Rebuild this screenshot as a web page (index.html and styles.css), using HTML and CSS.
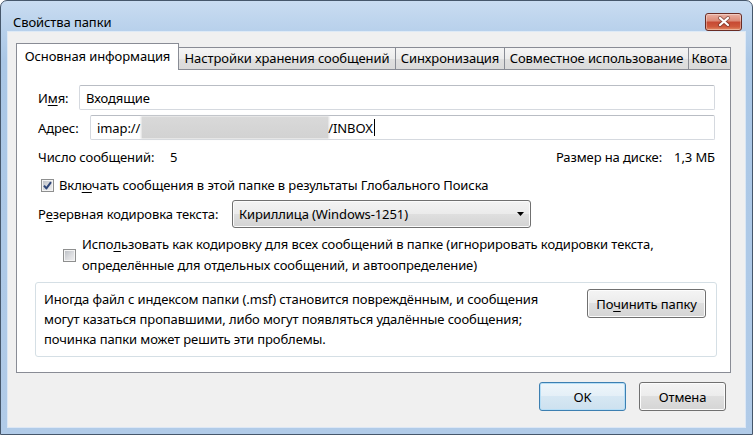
FILE: index.html
```html
<!DOCTYPE html>
<html lang="ru">
<head>
<meta charset="utf-8">
<title>Свойства папки</title>
<link rel="stylesheet" href="styles.css">
</head>
<body>
<div class="window">
  <div class="titlebar">
    <span class="title">Свойства папки</span>
    <button class="close" aria-label="Закрыть">
      <svg width="14" height="11" viewBox="0 0 14 11">
        <path d="M3 2 L11 9 M11 2 L3 9" stroke="#5a2a22" stroke-width="4" stroke-linecap="round" fill="none" opacity="0.55"/>
        <path d="M3 2 L11 9 M11 2 L3 9" stroke="#ffffff" stroke-width="2.2" stroke-linecap="round" fill="none"/>
      </svg>
    </button>
  </div>
  <div class="client">
    <div class="tabs">
      <div class="tab active t1">Основная информация</div>
      <div class="tab t2">Настройки хранения сообщений</div>
      <div class="tab t3">Синхронизация</div>
      <div class="tab t4">Совместное использование</div>
      <div class="tab t5">Квота</div>
    </div>
    <div class="panel">
      <div class="field-row first">
        <span class="lbl lbl-name">И<u>м</u>я:</span>
        <div class="textbox">Входящие</div>
      </div>
      <div class="field-row">
        <span class="lbl lbl-addr">Адрес:</span>
        <div class="textbox">imap://<span class="blur"></span>/INBOX<span class="caret"></span></div>
      </div>
      <div class="stats">
        <span class="stat"><span class="stat-lbl">Число сообщений:</span><span>5</span></span>
        <span class="stat"><span class="stat-lbl right">Размер на диске:</span><span>1,3 МБ</span></span>
      </div>
      <div class="check-row">
        <span class="checkbox">
          <svg class="tick" width="9" height="9" viewBox="0 0 9 9">
            <path d="M1 4.6 L3.4 7.4 L8 1.2" stroke="#2e4577" stroke-width="2" fill="none" stroke-linejoin="round"/>
          </svg>
        </span>
        <span>Вкл<u>ю</u>чать сообщения в этой папке в результаты Глобального Поиска</span>
      </div>
      <div class="select-row">
        <span class="lbl lbl-enc">Р<u>е</u>зервная кодировка текста:</span>
        <div class="combo">
          <span>Кириллица (Windows-1251)</span>
          <svg width="7" height="4" viewBox="0 0 7 4"><path d="M0 0 H7 L3.5 4 Z" fill="#000"/></svg>
        </div>
      </div>
      <div class="check2">
        <span class="checkbox"></span>
        <span class="check2-text">Испо<u>л</u>ьзовать как кодировку для всех сообщений в папке (игнорировать кодировки текста,<br>определённые для отдельных сообщений, и автоопределение)</span>
      </div>
      <div class="group">
        <p class="group-text">Иногда файл с индексом папки (.msf) становится повреждённым, и сообщения<br>могут казаться пропавшими, либо могут появляться удалённые сообщения;<br>починка папки может решить эти проблемы.</p>
        <button class="btn repair">По<u>ч</u>инить папку</button>
      </div>
    </div>
    <div class="buttons">
      <button class="btn dlg default">OK</button>
      <button class="btn dlg">Отмена</button>
    </div>
  </div>
</div>
</body>
</html>
```
FILE: styles.css
```css
* { box-sizing: border-box; }
html, body { margin: 0; padding: 0; }
body {
  width: 753px;
  height: 435px;
  overflow: hidden;
  background: #ffffff;
  font-family: "Noto Sans", "Open Sans", "DejaVu Sans", sans-serif;
  font-size: 13px;
  letter-spacing: -0.1px;
  color: #000;
}
u { text-decoration: underline; text-underline-offset: 2px; }

.window {
  height: 435px;
  display: flex;
  flex-direction: column;
  border: 1px solid #46576b;
  border-radius: 7px 7px 0 0;
  background: linear-gradient(180deg, #c9dcf1 0px, #b7d0eb 31px, #aac7e6 60px, #b1cbe8 100%);
}

.titlebar {
  height: 31px;
  flex: none;
  display: flex;
  align-items: center;
  justify-content: space-between;
  padding: 10px 10px 0 12px;
}
.title { font-size: 13px; color: #000; line-height: 18px; }
.close {
  width: 37px;
  height: 18px;
  padding: 0;
  margin: 0;
  display: flex;
  align-items: center;
  justify-content: center;
  border: 1px solid #6a2c24;
  border-radius: 3px;
  background: linear-gradient(180deg, #eab0a2 0%, #dc8b78 42%, #c74a33 52%, #cf5a3d 80%, #e48e67 100%);
  box-shadow: inset 0 0 0 1px rgba(255, 255, 255, 0.35);
}

.client {
  flex: 1;
  margin: 0 7px 7px 7px;
  background: #f0f0f0;
  display: flex;
  flex-direction: column;
  padding: 11px 14px 16px 8px;
  box-shadow: 0 0 0 1px rgba(255, 255, 255, 0.55);
}

.tabs {
  height: 26px;
  flex: none;
  display: flex;
  align-items: flex-end;
  position: relative;
  z-index: 1;
}
.tab {
  height: 22px;
  line-height: 21px;
  text-align: center;
  white-space: nowrap;
  border: 1px solid #898c95;
  border-bottom: none;
  margin-left: -1px;
  background: linear-gradient(180deg, #f5f5f5 0%, #ececec 50%, #e0e0e0 51%, #dadada 100%);
  color: #000;
}
.tab.active {
  height: 27px;
  line-height: 24px;
  margin-left: 0;
  margin-bottom: -1px;
  background: #ffffff;
  position: relative;
  z-index: 2;
}
.t1 { width: 163px; }
.t2 { width: 218px; }
.t3 { width: 110px; }
.t4 { width: 185px; }
.t5 { width: 43px; }

.panel {
  flex: 1;
  background: #ffffff;
  border: 1px solid #898c95;
  padding: 15px 15px 0 21px;
  display: flex;
  flex-direction: column;
}

.field-row {
  display: flex;
  align-items: center;
  height: 25px;
  margin-top: 5px;
}
.field-row.first { margin-top: 0; }
.lbl { flex: none; white-space: nowrap; }
.lbl-name { width: 41px; }
.lbl-addr { width: 52px; }
.lbl-enc { width: 194px; }

.textbox {
  flex: 1;
  height: 25px;
  display: flex;
  align-items: center;
  padding-left: 6px;
  border: 1px solid #d5d9df;
  border-top-color: #b9bdc4;
  border-radius: 2px;
  background: #ffffff;
  white-space: nowrap;
}
.blur {
  display: inline-block;
  width: 186px;
  height: 21px;
  margin-left: 2px;
  background: linear-gradient(180deg, #d9d9d9, #d2d2d2);
  box-shadow: 0 0 2px 1px #dadada;
}
.caret {
  display: inline-block;
  width: 1px;
  height: 17px;
  background: #000;
  margin-left: 1px;
}

.stats {
  height: 22px;
  margin-top: 6px;
  display: flex;
  align-items: center;
  justify-content: space-between;
}
.stat { display: flex; white-space: nowrap; }
.stat-lbl { width: 132px; }
.stat-lbl.right { width: auto; margin-right: 12px; }

.check-row {
  height: 22px;
  margin-top: 6px;
  display: flex;
  align-items: center;
  padding-left: 3px;
  white-space: nowrap;
}
.checkbox {
  flex: none;
  width: 13px;
  height: 13px;
  border: 1px solid #8e8f8f;
  background: linear-gradient(135deg, #b8bcc2 0%, #dcdde0 55%, #f0f0f1 100%);
  box-shadow: inset 0 0 0 1px #f4f4f4;
  display: flex;
  align-items: center;
  justify-content: center;
  margin-right: 5px;
}
.checkbox .tick { display: block; }

.select-row {
  height: 28px;
  margin-top: 4px;
  display: flex;
  align-items: center;
}
.combo {
  width: 299px;
  height: 28px;
  display: flex;
  align-items: center;
  justify-content: space-between;
  padding: 0 6px 0 6px;
  border: 1px solid #707070;
  border-radius: 3px;
  background: linear-gradient(180deg, #f3f3f3 0%, #ebebeb 49%, #dfdfdf 50%, #d3d3d3 100%);
  box-shadow: inset 0 0 0 1px #fbfbfb;
  white-space: nowrap;
}

.check2 {
  margin-top: 6px;
  display: flex;
  align-items: center;
  padding-left: 25px;
}
.check2 .checkbox { margin-right: 6px; }
.check2-text { line-height: 21px; white-space: nowrap; }

.group {
  margin: 6px -2px 0 -3px;
  height: 75px;
  border: 1px solid #d5dfe5;
  border-radius: 3px;
  display: flex;
  justify-content: space-between;
  align-items: flex-start;
  padding: 6px 10px 0 8px;
}
.group-text {
  margin: 0;
  line-height: 20px;
  white-space: nowrap;
}

.btn {
  font-family: inherit;
  font-size: 13px;
  letter-spacing: -0.1px;
  color: #000;
  border: 1px solid #707070;
  border-radius: 3px;
  background: linear-gradient(180deg, #f4f4f4 0%, #ececec 49%, #dfdfdf 50%, #d5d5d5 100%);
  box-shadow: inset 0 0 0 1px #fcfcfc;
  padding: 0;
  margin: 0;
  white-space: nowrap;
}
.repair { width: 119px; height: 29px; }

.buttons {
  flex: none;
  margin-top: 9px;
  margin-right: 5px;
  display: flex;
  justify-content: flex-end;
  gap: 13px;
}
.dlg { width: 87px; height: 29px; }
.default {
  border-color: #3c7fb1;
  box-shadow: inset 0 0 0 1px #b6def6;
  background: linear-gradient(180deg, #eef6fb 0%, #e4eff7 49%, #d6e7f3 50%, #cde1ef 100%);
}
```
